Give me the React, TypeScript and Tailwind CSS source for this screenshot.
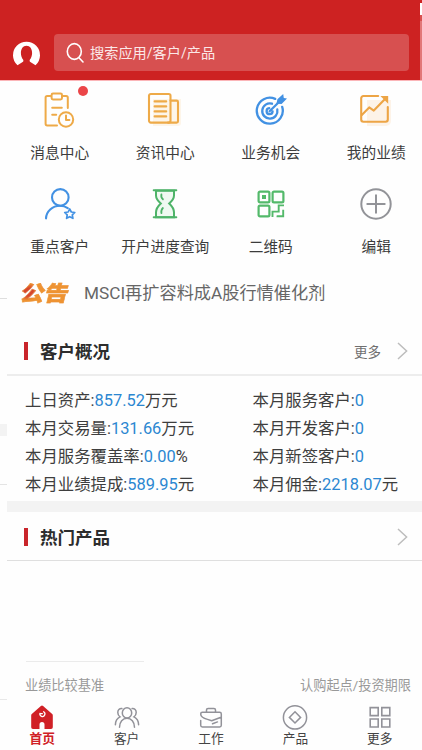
import type { ReactNode } from "react";

interface Shortcut {
  label: string;
  icon: ReactNode;
  dot?: boolean;
}

interface Stat {
  label: string;
  value: string;
  unit?: string;
}

/* 快捷入口图标 */
const TasksIcon = () => (
  <svg width="32" height="36" viewBox="0 0 32 36" fill="none" stroke="#eeaa48" strokeWidth="2" strokeLinecap="round" strokeLinejoin="round">
    <path d="M7 4H3.2A1.6 1.6 0 0 0 1.6 5.6v26.2a1.6 1.6 0 0 0 1.6 1.6H13M19 4h3.2a1.6 1.6 0 0 1 1.6 1.6V16" />
    <rect x="7.6" y="1.6" width="10.4" height="5.8" rx="1.4" />
    <path d="M8.2 15.8h9.6M8.2 22.8h4" />
    <circle cx="22" cy="27.5" r="7.2" />
    <path d="M22 23.5v4.4h3.4" />
  </svg>
);

const NewsIcon = () => (
  <svg width="38" height="36" viewBox="0 0 38 36" fill="none" stroke="#eeaa48" strokeWidth="2.1" strokeLinecap="round" strokeLinejoin="round">
    <path d="M7 7h28v24a3 3 0 0 1-3 3H7Z" fill="#fdf5e9" stroke="none" />
    <rect x="3" y="2" width="21.5" height="28.6" rx="1.8" />
    <path d="M24.5 8.6h6.1a1.4 1.4 0 0 1 1.4 1.4v19.2a1.4 1.4 0 0 1-1.4 1.4H22" />
    <path d="M8.6 9.4h11.6M8.6 14.4h11.6M8.6 19.4h11.6M8.6 24.4h11.6" />
  </svg>
);

const TargetIcon = () => (
  <svg width="32" height="32" viewBox="0 0 32 32" fill="none" stroke="#4291e3" strokeWidth="2.3" strokeLinecap="round">
    <path d="M20.2 4.9a13 13 0 1 0 7 8" />
    <path d="M17 9.7a7.6 7.6 0 1 0 5.3 5.8" />
    <path d="M14.2 14.2a3 3 0 1 0 3.4 3.2M14.6 17.2 24 8" />
    <path d="m21.4 9.8 1-4.6L28.2 0l.6 4 3.2.6-5.4 5.4Z" fill="#4291e3" stroke="none" />
  </svg>
);

const TrendIcon = () => (
  <svg width="34" height="34" viewBox="0 0 34 34" fill="none" stroke="#eda546" strokeWidth="2.1" strokeLinecap="round" strokeLinejoin="round">
    <path d="M8 7h24v21a5 5 0 0 1-5 5H8Z" fill="#fdf3e8" stroke="none" />
    <path d="M19.2 3H4.4A2.2 2.2 0 0 0 2.2 5.2v21.4a2.2 2.2 0 0 0 2.2 2.2h22.2a2.2 2.2 0 0 0 2.2-2.2V14" />
    <path d="m2.8 22 7.4-7.6 4.6 3.2L26 6" />
    <path d="M21.4 3h7.8v7.8Z" fill="#eda546" stroke="none" />
  </svg>
);

const VipIcon = () => (
  <svg width="32" height="32" viewBox="0 0 32 32" fill="none" stroke="#4291e3" strokeWidth="2.1" strokeLinecap="round" strokeLinejoin="round">
    <circle cx="16.3" cy="9.4" r="8.3" />
    <path d="M2 30.4C2.2 23.4 8.4 17.7 16 17.7c3 0 5.6.8 7.8 2.4" />
    <path d="m25.7 20.9 1.6 3.1 3.5.5-2.5 2.4.6 3.4-3.2-1.6-3.1 1.6.6-3.4-2.5-2.4 3.5-.5Z" strokeWidth="1.7" />
  </svg>
);

const HourglassIcon = () => (
  <svg width="26" height="32" viewBox="0 0 26 32" fill="none" stroke="#4eb368" strokeWidth="2" strokeLinecap="round">
    <path d="M4 2.7h18v4.8c0 3.5-2 5.5-4.8 7.9C20 18 22 20.3 22 24.2v5H4v-5c0-3.9 2-6.2 4.8-8.8C6 13 4 11 4 7.5Z" fill="#eff9f1" />
    <path d="M1.7 2.2h22.6M1.7 29.3h22.6" />
    <path d="M9.4 6.4c-.4 2 0 3.6 1.5 4.9M10.9 20c-1.5 1.4-1.9 2.9-1.5 5.2" strokeWidth="1.8" />
  </svg>
);

const QrIcon = () => (
  <svg width="28" height="28" viewBox="0 0 28 28" fill="none" stroke="#53b96a" strokeWidth="2.2">
    <rect x="1.6" y="1.6" width="10.8" height="10.8" rx="1.4" />
    <rect x="15.6" y="1.6" width="10.8" height="10.8" rx="1.4" />
    <rect x="1.6" y="15.6" width="10.8" height="10.8" rx="1.4" />
    <rect x="5" y="5" width="4" height="4" fill="#53b96a" stroke="none" />
    <path d="M15.5 27v-5.4h6.2v-6.2H27M20.5 27.2V25.4M20 26.2h6.2v-6.4" strokeWidth="1.9" />
  </svg>
);

const AddIcon = () => (
  <svg width="32" height="32" viewBox="0 0 32 32" fill="none" stroke="#929398" strokeWidth="2" strokeLinecap="round">
    <circle cx="16" cy="16" r="14.7" />
    <path d="M16 7.3v17.4M7.3 16h17.4" />
  </svg>
);

/* 底部导航图标 */
const HomeIcon = () => (
  <svg width="26" height="26" viewBox="0 0 26 26">
    <path d="M11.9 1.1a1.6 1.6 0 0 1 2.2 0L23.2 9.1c.4.4.6.8.6 1.3v11.8a1.8 1.8 0 0 1-1.8 1.8H15.5v-4.5a2.5 2.5 0 0 0-5 0V24H4A1.8 1.8 0 0 1 2.2 22.2V10.4c0-.5.2-.9.6-1.3Z" fill="#d02026" />
    <path d="M11 8.3a2.5 2.5 0 1 0 3.6-1.5M11 8.3l2.3.3" fill="none" stroke="#fff" strokeWidth="1.3" strokeLinecap="round" />
  </svg>
);

const UsersIcon = () => (
  <svg width="26" height="26" viewBox="0 0 26 26" fill="none" stroke="#929299" strokeWidth="1.5" strokeLinecap="round">
    <ellipse cx="13" cy="7.9" rx="4.7" ry="5.2" />
    <path d="M5.5 22.3c0-5.3 3.2-9.1 7.5-9.1s7.5 3.8 7.5 9.1" />
    <path d="M7.9 3.6C5.3 3.4 3.8 5.1 3.8 7.5c0 2 .8 3.4 2.2 4.4-2.5 1.2-4.5 4-4.6 7.8M18.1 3.6c2.6-.2 4.1 1.5 4.1 3.9 0 2-.8 3.4-2.2 4.4 2.5 1.2 4.5 4 4.6 7.8" />
  </svg>
);

const WorkIcon = () => (
  <svg width="26" height="26" viewBox="0 0 26 26" fill="none" stroke="#929299" strokeWidth="1.5" strokeLinecap="round" strokeLinejoin="round">
    <path d="M8.5 7.2V5c0-1 .7-1.6 1.6-1.6h5.8c.9 0 1.6.6 1.6 1.6v2.2" />
    <path d="M2.7 15.5v4.7c0 1 .8 1.7 1.7 1.7h17.2c.9 0 1.7-.7 1.7-1.7V9c0-1-.8-1.7-1.7-1.7H4.4c-1 0-1.7.7-1.7 1.7 0 3 2.8 4.3 6.8 5.4l4.2 1.4 9.3-3.6M14.5 18.8l5-1.9" />
  </svg>
);

const ProductIcon = () => (
  <svg width="26" height="26" viewBox="0 0 26 26" fill="none" stroke="#929299" strokeWidth="1.5">
    <circle cx="13" cy="12.4" r="11.6" />
    <path d="m13 6.8 5.6 5.6L13 18l-5.6-5.6Z" />
  </svg>
);

const MoreIcon = () => (
  <svg width="26" height="26" viewBox="0 0 26 26" fill="none" stroke="#929299" strokeWidth="1.6">
    <path d="M3.2 2.6h8v8h-8ZM14.8 2.6h8v8h-8ZM3.2 14h8v8h-8ZM14.8 14h8v8h-8Z" />
  </svg>
);

const SHORTCUTS: Shortcut[] = [
  { label: "消息中心", icon: <TasksIcon />, dot: true },
  { label: "资讯中心", icon: <NewsIcon /> },
  { label: "业务机会", icon: <TargetIcon /> },
  { label: "我的业绩", icon: <TrendIcon /> },
  { label: "重点客户", icon: <VipIcon /> },
  { label: "开户进度查询", icon: <HourglassIcon /> },
  { label: "二维码", icon: <QrIcon /> },
  { label: "编辑", icon: <AddIcon /> },
];

const STATS: Stat[] = [
  { label: "上日资产", value: "857.52", unit: "万元" },
  { label: "本月服务客户", value: "0" },
  { label: "本月交易量", value: "131.66", unit: "万元" },
  { label: "本月开发客户", value: "0" },
  { label: "本月服务覆盖率", value: "0.00", unit: "%" },
  { label: "本月新签客户", value: "0" },
  { label: "本月业绩提成", value: "589.95", unit: "元" },
  { label: "本月佣金", value: "2218.07", unit: "元" },
];

const TABS = [
  { label: "首页", icon: <HomeIcon />, active: true },
  { label: "客户", icon: <UsersIcon />, active: false },
  { label: "工作", icon: <WorkIcon />, active: false },
  { label: "产品", icon: <ProductIcon />, active: false },
  { label: "更多", icon: <MoreIcon />, active: false },
];

function Header() {
  return (
    <header className="relative flex h-20 shrink-0 items-start bg-[#cd2222] pt-[34px] pl-[12px]">
      <svg className="mt-[5px]" width="29" height="28" viewBox="0 0 29 28">
        <path
          d="M5.5 26.3A13.5 13.5 0 1 1 23.5 26.3L18 22.7c-.5-.4-.5-1.5 0-2.2 1.3-1.6 2.1-4 2.1-6.5 0-4-2-7.2-5.6-7.2S8.9 10 8.9 14c0 2.5.8 4.9 2.1 6.5.5.7.5 1.8 0 2.2Z"
          fill="#fff"
        />
      </svg>
      <div className="ml-[13px] flex h-[37px] w-[355px] items-center rounded-[4px] bg-[#d75050] pl-[12px]">
        <svg width="19" height="22" viewBox="0 0 19 22" fill="none" stroke="#fff" strokeWidth="1.6" strokeLinecap="round">
          <ellipse cx="8.3" cy="9.5" rx="7" ry="7.9" />
          <path d="m13 15.8 4 4.2" />
        </svg>
        <span className="ml-[5px] text-[14.2px] leading-5 text-[#fbe8e8]">搜索应用/客户/产品</span>
      </div>
      {/* 右侧相邻页的边缘 */}
      <div className="absolute top-[3px] right-0 h-[77px] w-[2px] bg-[#e27778]">
        <div className="h-3 bg-white" />
        <div className="h-[6px] bg-[#d95050]" />
      </div>
    </header>
  );
}

function ShortcutItem({ label, icon, dot }: Shortcut) {
  return (
    <div className="relative flex h-[93px] flex-col items-center">
      <div className="flex h-[60px] items-center justify-center">{icon}</div>
      <span className="text-[14.7px] leading-[26px] whitespace-nowrap text-[#3c3c3c]">{label}</span>
      {dot && <i className="absolute top-[6px] left-[71px] size-[10px] rounded-full bg-[#eb4548]" />}
    </div>
  );
}

function SectionTitle({ title, more }: { title: string; more?: string }) {
  return (
    <div className="flex h-[46px] items-center pr-[14px] pl-[17px]">
      <div className="h-[18px] w-[4px] bg-[#c9252b]" />
      <h2 className="ml-[12px] flex-1 pt-[2px] text-[17.5px] leading-6 font-bold text-[#2d2d2d]">{title}</h2>
      {more && <span className="mr-[16px] pt-[2px] text-[13.5px] text-[#6f6f6f]">{more}</span>}
      <svg width="11" height="18" viewBox="0 0 11 18" fill="none" stroke="#bdbdbd" strokeWidth="1.5">
        <path d="m1 1 8.6 8L1 17" />
      </svg>
    </div>
  );
}

export default function App() {
  return (
    <div className="flex h-[750px] w-[422px] flex-col overflow-hidden bg-[#fefefe] font-[Roboto,'Noto_Sans_CJK_SC',sans-serif]">
      <Header />
      <div className="-mb-px h-px shrink-0 bg-[#fbb5b8]" />

      <div className="flex h-[618px] shrink-0">
        {/* 左侧相邻页的边缘 */}
        <div className="w-[7px] shrink-0 pt-[218px]">
          <div className="h-px bg-[#dedede]" />
          <div className="mt-[125px] h-[12px] bg-[#f3f3f3]" />
          <div className="mt-[48px] h-px bg-[#e4e4e4]" />
        </div>

        <main className="flex w-[415px] flex-col overflow-hidden">
          <div className="grid w-[422px] shrink-0 grid-cols-4 gap-y-px">
            {SHORTCUTS.map((s) => (
              <ShortcutItem key={s.label} {...s} />
            ))}
          </div>

          {/* 公告 */}
          <div className="flex h-[53px] shrink-0 items-center pl-[14px]">
            <span className="w-[48px] -skew-x-12 scale-y-88 bg-[radial-gradient(circle_at_14%_42%,#d5472d_10%,#ee9332_22%)] bg-clip-text text-[24px] leading-7 font-black whitespace-nowrap text-transparent [-webkit-text-stroke:0.5px_#ee933299]">
              公告
            </span>
            <span className="ml-[15px] text-[17.2px] text-[#666]">MSCI再扩容料成A股行情催化剂</span>
          </div>

          {/* 客户概况 */}
          <div className="mt-[8px] border-b-2 border-[#ededed]">
            <SectionTitle title="客户概况" more="更多" />
          </div>
          <div className="grid grid-cols-[227.5px_1fr] pt-[11px] pb-[2px] pl-[18px] text-[16.4px] leading-7 whitespace-nowrap text-[#3e3e3e]">
            {STATS.map(({ label, value, unit }) => (
              <p key={label}>
                {label}:<span className="text-[#2b87d1]">{value}</span>
                {unit}
              </p>
            ))}
          </div>
          <div className="h-[11px] shrink-0 bg-[#f3f3f3]" />

          {/* 热门产品 */}
          <div className="border-b border-[#dfdfdf] pt-[2px]">
            <SectionTitle title="热门产品" />
          </div>
          <div className="mt-[100px] ml-[19px] h-px w-[118px] shrink-0 bg-[#ebebeb]" />
          <div className="flex justify-between pt-[14px] pr-[11px] pl-[18px] text-[13.2px] leading-5 text-[#999]">
            <span>业绩比较基准</span>
            <span>认购起点/投资期限</span>
          </div>
        </main>
      </div>

      <div className="mt-px h-px w-[7px] shrink-0 bg-[#e8e8e8]" />
      <nav className="grid grid-cols-5 pt-[5px]">
        {TABS.map(({ label, icon, active }) => (
          <div key={label} className="flex flex-col items-center">
            {icon}
            <span className={`text-[12.7px] leading-4 ${active ? "font-bold text-[#d02026]" : "text-[#444]"}`}>{label}</span>
          </div>
        ))}
      </nav>
    </div>
  );
}
